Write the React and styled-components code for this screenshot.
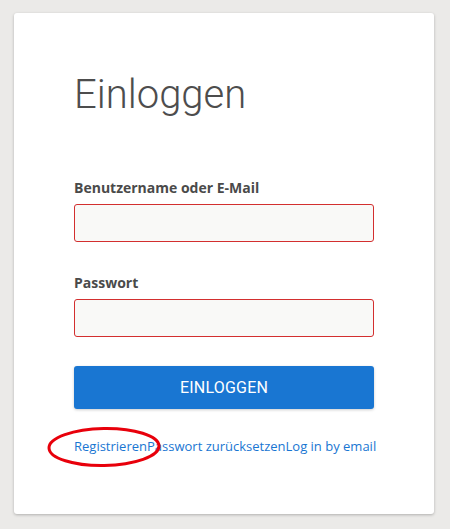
import React from 'react'
import styled, { createGlobalStyle } from 'styled-components'

const GlobalStyle = createGlobalStyle`
  html, body {
    margin: 0;
    padding: 0;
    background: #ebeae8;
  }
  * { box-sizing: border-box; }
`

const Page = styled.div`
  padding: 13px 16px 15px 14px;
`

const Card = styled.div`
  position: relative;
  width: 420px;
  height: 501px;
  background: #fff;
  border-radius: 3px;
  box-shadow: 0 1px 3px rgba(0, 0, 0, 0.25);
  padding: 58px 60px 0 60px;
`

const Title = styled.h1`
  margin: 0 0 59px 0;
  font-family: Roboto, 'Liberation Sans', sans-serif;
  font-weight: 300;
  font-size: 40px;
  line-height: 48px;
  color: #4d4d4d;
`

const Field = styled.div`
  display: flex;
  flex-direction: column;
  gap: 7px;
  margin-bottom: 31px;
`

const Label = styled.label`
  font-family: 'Open Sans', 'Liberation Sans', sans-serif;
  font-weight: 700;
  font-size: 14px;
  line-height: 19px;
  color: #4a4a4a;
`

const Input = styled.input`
  width: 300px;
  height: 38px;
  border: 1px solid #d32f2f;
  border-radius: 3px;
  background: #f9f9f7;
  outline: none;
`

const Button = styled.button`
  display: block;
  width: 300px;
  height: 43px;
  margin-top: -2px;
  border: none;
  border-radius: 3px;
  background: #1976d2;
  color: #fff;
  font-family: Roboto, 'Liberation Sans', sans-serif;
  font-size: 16px;
  letter-spacing: 0.2px;
  text-transform: uppercase;
  box-shadow: 0 1px 3px rgba(0, 0, 0, 0.2);
`

const Links = styled.div`
  display: flex;
  white-space: nowrap;
  margin-top: 28px;
  font-family: 'Open Sans', 'Liberation Sans', sans-serif;
  font-size: 13px;
  line-height: 18px;
`

const Link = styled.a`
  color: #1976d2;
  text-decoration: none;
`

const Mark = styled.svg`
  position: absolute;
  left: 32px;
  top: 413px;
  pointer-events: none;
`

export default function App() {
  return (
    <>
      <GlobalStyle />
      <Page>
        <Card>
          <Title>Einloggen</Title>
          <Field>
            <Label>Benutzername oder E-Mail</Label>
            <Input />
          </Field>
          <Field>
            <Label>Passwort</Label>
            <Input type="password" />
          </Field>
          <Button>Einloggen</Button>
          <Links>
            <Link href="#">Registrieren</Link>
            <Link href="#">Passwort zurücksetzen</Link>
            <Link href="#">Log in by email</Link>
          </Links>
          <Mark width="118" height="44" viewBox="0 0 118 44">
            <ellipse cx="58" cy="21" rx="55" ry="18.5" fill="none" stroke="#e8000b" strokeWidth="3" transform="rotate(-1 58 21)" />
          </Mark>
        </Card>
      </Page>
    </>
  )
}
